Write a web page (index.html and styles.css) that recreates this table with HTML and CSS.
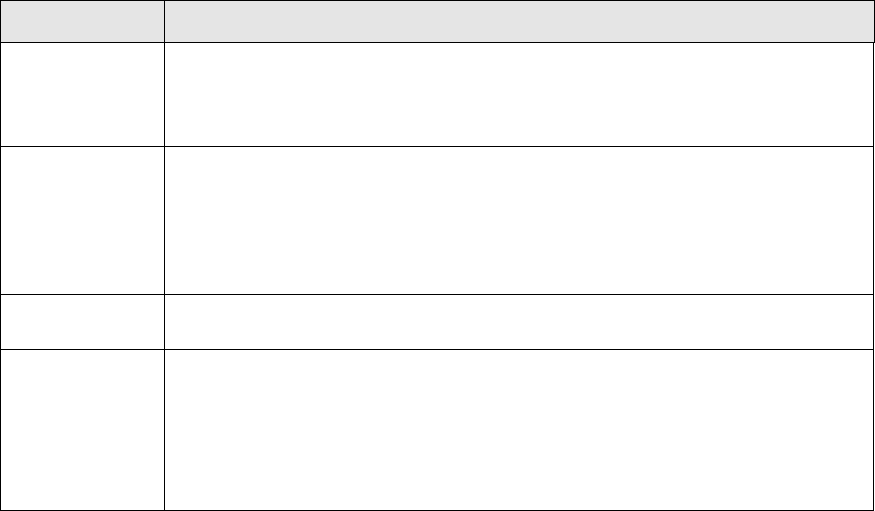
FILE: index.html
```html
<!DOCTYPE html>
<html>
<head>
<meta charset="utf-8">
<link rel="stylesheet" href="styles.css">
</head>
<body>
<div class="table">
  <div class="row head">
    <div class="cell key"></div>
    <div class="cell"></div>
  </div>
  <div class="row body r1">
    <div class="cell key"></div>
    <div class="cell"></div>
  </div>
  <div class="row body r2">
    <div class="cell key"></div>
    <div class="cell"></div>
  </div>
  <div class="row body r3">
    <div class="cell key"></div>
    <div class="cell"></div>
  </div>
  <div class="row body r4">
    <div class="cell key"></div>
    <div class="cell"></div>
  </div>
</div>
</body>
</html>
```
FILE: styles.css
```css
html, body {
  margin: 0;
  padding: 0;
  background: #ffffff;
  font-family: "Liberation Sans", Arial, sans-serif;
}
.table {
  display: flex;
  flex-direction: column;
  width: 875px;
}
.row {
  display: grid;
  grid-template-columns: 164px 1fr;
  box-sizing: border-box;
  border-left: 1px solid #000;
  border-right: 1px solid #000;
  border-bottom: 1px solid #000;
}
.head {
  width: 875px;
  height: 43px;
  border-top: 1px solid #000;
  background: #e5e5e5;
}
.body {
  width: 874px;
  background: #ffffff;
}
.r1 { height: 104px; }
.r2 { height: 148px; }
.r3 { height: 55px; }
.r4 { height: 161px; }
.cell {
  box-sizing: border-box;
}
.key {
  border-right: 1px solid #000;
}
```
